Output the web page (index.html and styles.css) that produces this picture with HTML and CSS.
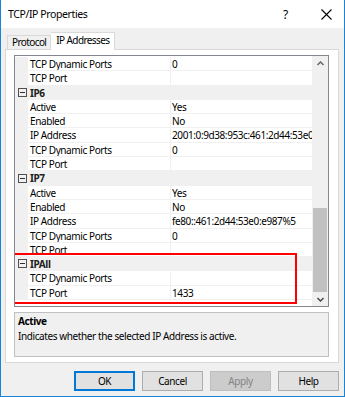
FILE: index.html
```html
<!DOCTYPE html>
<html lang="en">
<head>
    <meta charset="UTF-8">
    <title>TCP/IP Properties</title>
    <link rel="stylesheet" href="styles.css">
</head>
<body>
    <div class="window">
        <div class="titlebar">
            <span class="title">TCP/IP Properties</span>
            <span class="help">?</span>
            <span class="close">
                <svg width="11" height="11" viewBox="0 0 11 11"><path d="M0.5 0.5 L10.5 10.5 M10.5 0.5 L0.5 10.5" stroke="#000" stroke-width="1.1" fill="none"/></svg>
            </span>
        </div>
        <div class="content">
            <div class="tabs">
                <div class="tab">Protocol</div>
                <div class="tab active">IP Addresses</div>
            </div>
            <div class="panel">
                <div class="grid">
                    <div class="rows">
                        <div class="row"><span class="gutter"></span><span class="name">TCP Dynamic Ports</span><span class="value">0</span></div>
                        <div class="row"><span class="gutter"></span><span class="name">TCP Port</span><span class="value"></span></div>
                        <div class="row cat"><span class="gutter"><i class="toggle"></i></span><span class="name">IP6</span></div>
                        <div class="row"><span class="gutter"></span><span class="name">Active</span><span class="value">Yes</span></div>
                        <div class="row"><span class="gutter"></span><span class="name">Enabled</span><span class="value">No</span></div>
                        <div class="row"><span class="gutter"></span><span class="name">IP Address</span><span class="value">2001:0:9d38:953c:461:2d44:53e0:e987</span></div>
                        <div class="row"><span class="gutter"></span><span class="name">TCP Dynamic Ports</span><span class="value">0</span></div>
                        <div class="row"><span class="gutter"></span><span class="name">TCP Port</span><span class="value"></span></div>
                        <div class="row cat"><span class="gutter"><i class="toggle"></i></span><span class="name">IP7</span></div>
                        <div class="row"><span class="gutter"></span><span class="name">Active</span><span class="value">Yes</span></div>
                        <div class="row"><span class="gutter"></span><span class="name">Enabled</span><span class="value">No</span></div>
                        <div class="row"><span class="gutter"></span><span class="name">IP Address</span><span class="value">fe80::461:2d44:53e0:e987%5</span></div>
                        <div class="row"><span class="gutter"></span><span class="name">TCP Dynamic Ports</span><span class="value">0</span></div>
                        <div class="row"><span class="gutter"></span><span class="name">TCP Port</span><span class="value"></span></div>
                        <div class="row cat"><span class="gutter"><i class="toggle"></i></span><span class="name">IPAll</span></div>
                        <div class="row"><span class="gutter"></span><span class="name">TCP Dynamic Ports</span><span class="value"></span></div>
                        <div class="row"><span class="gutter"></span><span class="name">TCP Port</span><span class="value">1433</span></div>
                        <div class="highlight"></div>
                    </div>
                    <div class="scrollbar">
                        <div class="arrow">
                            <svg width="7" height="5" viewBox="0 0 7 5"><path d="M0.5 4 L3.5 1 L6.5 4" stroke="#606060" stroke-width="1.4" fill="none"/></svg>
                        </div>
                        <div class="track"><div class="thumb"></div></div>
                        <div class="arrow">
                            <svg width="7" height="5" viewBox="0 0 7 5"><path d="M0.5 1 L3.5 4 L6.5 1" stroke="#404040" stroke-width="1.4" fill="none"/></svg>
                        </div>
                    </div>
                </div>
                <div class="desc">
                    <div class="desc-title">Active</div>
                    <div class="desc-text">Indicates whether the selected IP Address is active.</div>
                </div>
            </div>
            <div class="buttons">
                <div class="btn default">OK</div>
                <div class="btn">Cancel</div>
                <div class="btn disabled">Apply</div>
                <div class="btn">Help</div>
            </div>
        </div>
    </div>
</body>
</html>
```

FILE: styles.css
```css
body {
    margin: 0;
    font-family: 'Noto Sans', 'Open Sans', sans-serif;
    font-size: 10px;
    letter-spacing: -0.4px;
    color: #000;
    background-color: #fff;
}
.window {
    width: 345px;
    height: 397px;
    box-sizing: border-box;
    border: 1px solid #1883d7;
    border-top: none;
    display: flex;
    flex-direction: column;
    background-color: #f0f0f0;
}
.titlebar {
    height: 28px;
    background-color: #fff;
    display: flex;
    align-items: center;
    padding-left: 7px;
}
.title {
    flex: 1;
    font-size: 10.5px;
    letter-spacing: -0.4px;
}
.help {
    font-size: 12px;
    width: 16px;
    margin-right: 22px;
}
.close {
    width: 11px;
    margin-right: 12px;
    display: flex;
}
.content {
    flex: 1;
    padding: 4px 5px 0 4px;
    display: flex;
    flex-direction: column;
}
.tabs {
    display: flex;
    align-items: flex-end;
    height: 17px;
    padding-left: 2px;
    position: relative;
    z-index: 1;
    letter-spacing: -0.6px;
}
.tab {
    height: 14px;
    line-height: 13px;
    padding: 0 4px;
    border: 1px solid #d9d9d9;
    border-bottom: none;
    background-color: #f0f0f0;
    box-sizing: border-box;
}
.tab.active {
    height: 18px;
    line-height: 15px;
    padding: 0 5px;
    margin-bottom: -1px;
    background-color: #fff;
    border-left: none;
}
.panel {
    height: 314px;
    box-sizing: border-box;
    background-color: #fff;
    border: 1px solid #d9d9d9;
    padding: 5px 9px 5px 8px;
    display: flex;
    flex-direction: column;
    gap: 5px;
}
.grid {
    height: 252px;
    box-sizing: border-box;
    border: 1px solid #828790;
    display: flex;
}
.rows {
    flex: 1;
    position: relative;
    overflow: hidden;
    padding-top: 1px;
}
.row {
    display: flex;
    height: 14.3px;
    line-height: 14px;
    box-sizing: border-box;
    border-bottom: 1px solid #f0f0f0;
}
.gutter {
    width: 13px;
    flex: none;
    background-color: #f0f0f0;
    display: flex;
    align-items: center;
    justify-content: center;
}
.name {
    width: 140px;
    flex: none;
    padding-left: 2px;
    border-right: 1px solid #f0f0f0;
    white-space: nowrap;
    overflow: hidden;
}
.value {
    flex: 1;
    padding-left: 1px;
    white-space: nowrap;
    overflow: hidden;
}
.row.cat {
    background-color: #f0f0f0;
    border-bottom-color: #f0f0f0;
}
.row.cat .name {
    font-weight: bold;
    border-right: none;
    color: #202020;
}
.toggle {
    display: block;
    width: 7px;
    height: 7px;
    border: 1px solid #505050;
    position: relative;
    margin-left: 1px;
}
.toggle::after {
    content: "";
    position: absolute;
    left: 1px;
    right: 1px;
    top: 3px;
    height: 1px;
    background-color: #303030;
}
.highlight {
    position: absolute;
    left: -2px;
    top: 197px;
    width: 284px;
    height: 51px;
    border: 2px solid #f00;
    box-sizing: border-box;
}
.scrollbar {
    width: 16px;
    flex: none;
    background-color: #f0f0f0;
    display: flex;
    flex-direction: column;
}
.arrow {
    height: 14px;
    display: flex;
    align-items: center;
    justify-content: center;
}
.track {
    flex: 1;
    display: flex;
    flex-direction: column;
    justify-content: flex-end;
}
.thumb {
    height: 84px;
    margin: 0 1px;
    background-color: #c1c1c1;
}
.desc {
    flex: 1;
    border: 1px solid #c0c0c0;
    background-color: #f0f0f0;
    padding: 1px 3px;
}
.desc-title {
    font-weight: bold;
    line-height: 14px;
}
.desc-text {
    line-height: 14px;
    margin-top: 1px;
}
.buttons {
    display: flex;
    justify-content: flex-end;
    gap: 7px;
    padding-top: 8px;
}
.btn {
    width: 61px;
    height: 20px;
    box-sizing: border-box;
    border: 1px solid #adadad;
    background-color: #e1e1e1;
    text-align: center;
    line-height: 18px;
}
.btn.default {
    border: 2px solid #0078d7;
    line-height: 16px;
}
.btn.disabled {
    background-color: #cccccc;
    border-color: #bfbfbf;
    color: #838383;
}
```
